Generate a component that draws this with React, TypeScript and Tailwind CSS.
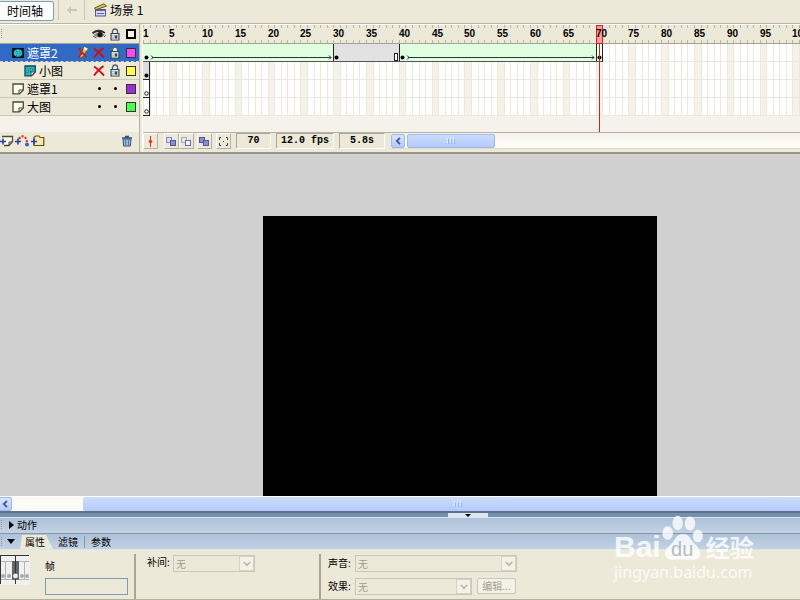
import React, { useState } from "react";

interface Layer {
  id: number;
  name: string;
  kind: "mask" | "masked" | "normal";
  locked: boolean;
  hidden: boolean;
  swatch: string;
}

const LAYERS: Layer[] = [
  { id: 1, name: "遮罩2", kind: "mask", locked: true, hidden: true, swatch: "bg-[#ff4af4]" },
  { id: 2, name: "小图", kind: "masked", locked: true, hidden: true, swatch: "bg-[#ffff4c]" },
  { id: 3, name: "遮罩1", kind: "normal", locked: false, hidden: false, swatch: "bg-[#9a2fd6]" },
  { id: 4, name: "大图", kind: "normal", locked: false, hidden: false, swatch: "bg-[#4cff4c]" },
];

const FRAME_W = 6.56;
const FRAME_COUNT = 220;
const LAST_LABEL = 100;
const ROW_H = 18;
const frames = Array.from({ length: FRAME_COUNT }, (_, i) => i + 1);
const frameX = (n: number) => Math.round((n - 1) * FRAME_W);

const EyeIcon = () => (
  <svg width="14" height="10" viewBox="0 0 14 10">
    <path d="M0 3.5Q3 .4 7 .8Q11 1 13.5 3.4L12.5 4.6Q9 2.6 6.5 3Q3.5 3.2 1 5Z" fill="#2b2b2b" />
    <path d="M1.5 6Q4 3.6 7 3.8Q11 4 13 6Q11 8.4 8 8.6Q4 8.6 1.5 6Z" fill="#8f8e87" />
    <circle cx="8" cy="5.6" r="2.6" fill="#111" />
    <path d="M1 7L4.5 9M12 8L13.5 6.5" stroke="#555" />
  </svg>
);

const LockIcon = () => (
  <svg width="10" height="13" viewBox="0 0 10 13">
    <path d="M2.5 6V3.6Q2.5 1 5 1Q7.5 1 7.5 3.6V6" fill="#e6eef4" stroke="#56616b" strokeWidth="1.4" />
    <rect x="1" y="5.5" width="8" height="6.5" fill="#a9c0d4" stroke="#3a4046" />
    <path d="M2 6.5H8M2 8.5H4" stroke="#dfeaf4" />
    <path d="M2 11H8" stroke="#e6dc9a" />
    <path d="M5 7.5H7V10.5H5Z" fill="#3b4650" />
  </svg>
);

const CrossIcon = () => (
  <svg width="12" height="12" viewBox="0 0 12 12">
    <path d="M1 1.5Q5 4 11 10.5M10.5 1Q6 4 1 10.5" fill="none" stroke="#cc1111" strokeWidth="2" />
  </svg>
);

const PencilIcon = () => (
  <svg width="12" height="13" viewBox="0 0 12 13">
    <path d="M7.5 .8L10.8 2.8L6 10.5L3 12.4L3 8.5Z" fill="#f0b85a" stroke="#5b3a12" strokeWidth=".7" />
    <path d="M7.5 .8L10.8 2.8L9.6 4.8L6.5 2.8Z" fill="#fbf5e4" />
    <path d="M1.5 2L9.5 11.5M6 6L1.5 11" stroke="#d01818" strokeWidth="1.7" />
  </svg>
);

const LayerIcon = ({ kind }: { kind: Layer["kind"] }) => {
  if (kind === "mask") {
    return (
      <svg width="12" height="12" viewBox="0 0 12 12">
        <rect y="1" width="12" height="10" fill="#0a0f12" />
        <ellipse cx="6" cy="6" rx="4.3" ry="3.8" fill="#22c3d4" />
        <path d="M4 4h1v1H4zM7 4h1v1H7zM5 6h1v1H5zM8 6h1v1H8zM4 8h1v1H4zM7 8h1v1H7z" fill="#0f7583" />
      </svg>
    );
  }
  const masked = kind === "masked";
  return (
    <svg width="12" height="12" viewBox="0 0 12 12">
      <path
        d="M1 1H11.3V7L7.5 10.8H1Z"
        fill={masked ? "#22b8c8" : "#fffff0"}
        stroke={masked ? "#0c4650" : "#4a4a38"}
        strokeWidth="1.3"
      />
      {masked && <path d="M3 3h1v1H3zM6 3h1v1H6zM4 5h1v1H4zM8 4h1v1H8zM3 7h1v1H3zM6 6h1v1H6z" fill="#083b44" />}
      <path d="M7 10.8V7H11Z" fill="#fff" stroke="#4a4a38" />
    </svg>
  );
};

const Dot = () => <span className="block h-[3px] w-[3px] rounded-full bg-black" />;

const Grip = () => (
  <svg width="5" height="10" viewBox="0 0 5 10" className="shrink-0">
    <path d="M1.5 0V10" stroke="#8f9aa4" strokeDasharray="1 1" />
  </svg>
);

const LayerRow = ({ layer, selected, onSelect }: { layer: Layer; selected: boolean; onSelect: () => void }) => (
  <li
    onClick={onSelect}
    className={`flex h-[18px] items-center border-b ${
      selected ? "border-dashed border-[#d8d4c0] bg-[#316ac5] text-white" : "border-[#cbc7b5] text-black"
    }`}
  >
    <button
      type="button"
      className={`flex flex-1 items-center gap-[3px] text-left text-[12px] leading-4 ${
        layer.kind === "masked" ? "pl-6" : "pl-3"
      }`}
    >
      <LayerIcon kind={layer.kind} />
      {layer.name}
    </button>
    <span className="flex w-4 justify-center">{selected && <PencilIcon />}</span>
    <button type="button" aria-label="隐藏" className="flex w-4 justify-center">
      {layer.hidden ? <CrossIcon /> : <Dot />}
    </button>
    <button type="button" aria-label="锁定" className="flex w-4 justify-center">
      {layer.locked ? <LockIcon /> : <Dot />}
    </button>
    <button type="button" aria-label="轮廓" className="flex w-4 justify-center">
      <span className={`block h-[10px] w-[10px] border border-[#333] ${layer.swatch}`} />
    </button>
  </li>
);

// Frame numbers and tick marks
const Ruler = () => (
  <svg width="100%" height="20" className="block bg-[#ece9d8]">
    <path d="M0 .5H2000" stroke="#fff" />
    {frames.map((n) => (
      <path key={n} d={`M${frameX(n) + 0.5} 1v3M${frameX(n) + 0.5} 16v3`} stroke="#b9b5a2" />
    ))}
    <path d="M0 19.5H2000" stroke="#a5a193" />
    <rect x={frameX(70) + 0.5} y="1.5" width="6" height="18" fill="#ff9b9b" stroke="#d42020" />
    {frames
      .filter((n) => n <= LAST_LABEL && (n === 1 || n % 5 === 0))
      .map((n) => (
        <text key={n} x={frameX(n)} y="13" className="font-['Liberation_Sans'] text-[10px] font-bold">
          {n}
        </text>
      ))}
  </svg>
);

const Tween = ({ from, to }: { from: number; to: number }) => {
  const x1 = frameX(from);
  const x2 = frameX(to);
  return (
    <g>
      <rect x={x1} y="0" width={x2 - x1} height="17" fill="#e0ffe0" />
      <path d={`M${x1 + 9} 13.5H${x2 - 2}`} stroke="#333" />
      <path d={`M${x1 + 8} 11.5l2 2l-2 2M${x2 - 4} 11.5l2 2l-2 2`} fill="none" stroke="#333" />
      <circle cx={x1 + 3.5} cy="13.5" r="2" />
    </g>
  );
};

const FrameGrid = () => (
  <svg width="100%" height="88" className="block bg-white">
    {frames.map((n) => (
      <g key={n}>
        {n % 5 === 0 && <rect x={frameX(n)} y="0" width="7" height="72" fill="#f5f2eb" />}
        <path d={`M${frameX(n) + 0.5} 0V72`} stroke="#ece9d8" />
      </g>
    ))}
    {[1, 2, 3, 4].map((r) => (
      <path key={r} d={`M0 ${r * ROW_H - 0.5}H2000`} stroke="#ece9d8" />
    ))}
    <rect y="72" width="100%" height="16" fill="#f5f2ec" />

    <Tween from={1} to={30} />
    <rect x={frameX(30)} width={frameX(40) - frameX(30)} height="17" fill="#e2e2e4" />
    <circle cx={frameX(30) + 3.5} cy="13.5" r="2" />
    <rect x={frameX(40) - 4.5} y="9.5" width="3" height="7" fill="#fff" stroke="#222" />
    <Tween from={40} to={70} />
    <rect x={frameX(70)} width="7" height="17" fill="#f0fff0" />
    <circle cx={frameX(70) + 3.5} cy="13.5" r="2" />
    <path d={`M${frameX(30) + 0.5} 0V17M${frameX(40) + 0.5} 0V17`} stroke="#222" />
    <path d={`M${frameX(70) + 0.5} 0V17M${frameX(71) + 0.5} 0V18`} stroke="#222" />
    <path d={`M0 17.5H${frameX(71)}`} stroke="#555" />

    {/* first frame of the lower layers */}
    <rect x="0" y="18" width="6" height="17" fill="#dcdcde" />
    <circle cx="3.5" cy="31.5" r="2" />
    <circle cx="3.5" cy="49.5" r="1.8" fill="#fff" stroke="#222" />
    <circle cx="3.5" cy="67.5" r="1.8" fill="#fff" stroke="#222" />
    <path d="M6.5 18V72M0 35.5H7M0 53.5H7M0 71.5H7" stroke="#222" />

    <path d={`M${frameX(70) + 3.5} 0V88`} stroke="#cc2222" />
  </svg>
);

const ToolButton = ({ label, children }: { label: string; children: React.ReactNode }) => (
  <button
    type="button"
    aria-label={label}
    className="flex h-4 w-[15px] items-center justify-center border border-t-white border-r-[#b5b19f] border-b-[#b5b19f] border-l-white"
  >
    <svg width="11" height="11" viewBox="0 0 11 11">
      {children}
    </svg>
  </button>
);

const StatusField = ({ className, children }: { className: string; children: React.ReactNode }) => (
  <output
    className={`flex h-4 items-center justify-center border border-t-[#aca899] border-r-white border-b-white border-l-[#aca899] font-['Liberation_Mono'] text-[10px] leading-3 font-bold whitespace-pre ${className}`}
  >
    {children}
  </output>
);

const ThumbGrip = () => (
  <svg width="8" height="6" viewBox="0 0 8 6">
    <path d="M.5 0V5M3.5 0V5M6.5 0V5" stroke="#eef4ff" />
    <path d="M1.5 1V6M4.5 1V6M7.5 1V6" stroke="#8cb0f8" />
  </svg>
);

const ScrollArrow = () => (
  <button
    type="button"
    aria-label="向左滚动"
    className="flex h-[14px] w-[14px] shrink-0 items-center justify-center rounded-[2px] border border-[#9fb8ea] bg-gradient-to-b from-[#d9e4ff] to-[#b4cafc]"
  >
    <svg width="6" height="8" viewBox="0 0 6 8">
      <path d="M5 .8L1.8 4L5 7.2" fill="none" stroke="#40588c" strokeWidth="1.8" />
    </svg>
  </button>
);

const SelectBox = ({ id, className }: { id: string; className: string }) => (
  <span className={`relative flex h-[17px] ${className}`}>
    <select
      id={id}
      disabled
      className="w-full appearance-none border border-[#c9c7ba] bg-[#ece9d8] pl-[2px] text-[10px] leading-[14px] text-[#a09d8c] opacity-100"
    >
      <option>无</option>
    </select>
    <span className="pointer-events-none absolute inset-y-px right-px flex w-[15px] items-center justify-center border border-[#d6d3c4] bg-[#f3f1e8]">
      <svg width="8" height="6" viewBox="0 0 8 6">
        <path d="M.8 1L4 4.2L7.2 1" fill="none" stroke="#bdbaa9" strokeWidth="1.7" />
      </svg>
    </span>
  </span>
);

const Timeline = ({ selected, onSelect }: { selected: number; onSelect: (id: number) => void }) => (
  <section className="flex shrink-0 border-b-2 border-[#98968a] bg-[#ece9d8]">
    <div className="flex w-[139px] shrink-0 flex-col">
      <div className="flex h-5 items-center border-t border-b border-t-white border-b-[#a5a193]">
        <Grip />
        <span className="flex-1" />
        <span className="flex w-4 justify-center"><EyeIcon /></span>
        <span className="flex w-4 justify-center"><LockIcon /></span>
        <span className="flex w-4 justify-center">
          <span className="block h-[10px] w-[10px] border-2 border-black bg-[#f4f2e6]" />
        </span>
      </div>
      <ul>
        {LAYERS.map((l) => (
          <LayerRow key={l.id} layer={l} selected={l.id === selected} onSelect={() => onSelect(l.id)} />
        ))}
      </ul>
      <div className="h-4 bg-[#f5f2ec]" />
      <div className="flex h-[18px] items-center gap-px pr-[6px]">
        <button type="button" aria-label="插入图层">
          <svg width="14" height="12" viewBox="0 0 14 12">
            <path d="M2 1.5H12.5V6.5L9 10.5H4" fill="#fffff0" stroke="#4a4a38" strokeWidth="1.3" />
            <path d="M9 10V7H12" fill="none" stroke="#4a4a38" />
            <path d="M0 6.5H6M3 3.5V9.5" stroke="#2b3fa8" strokeWidth="1.6" />
          </svg>
        </button>
        <button type="button" aria-label="添加引导层">
          <svg width="15" height="12" viewBox="0 0 15 12">
            <path d="M4 4Q6 .8 8.5 1.5Q11 2 12 7" fill="none" stroke="#e02020" strokeWidth="2" strokeDasharray="2 1.5" />
            <path d="M0 6.5H6M3 3.5V9.5" stroke="#2b3fa8" strokeWidth="1.6" />
            <circle cx="12" cy="9.5" r="2" fill="#2f62d8" />
          </svg>
        </button>
        <button type="button" aria-label="插入图层文件夹">
          <svg width="14" height="12" viewBox="0 0 14 12">
            <path d="M3 10.5V2.5L4.5 1H8L9 2.5H12.8V10.5Z" fill="#f9e6ac" stroke="#5c5020" strokeWidth="1.2" />
            <path d="M0 6.5H6M3 3.5V9.5" stroke="#2b3fa8" strokeWidth="1.6" />
          </svg>
        </button>
        <span className="flex-1" />
        <button type="button" aria-label="删除图层">
          <svg width="12" height="12" viewBox="0 0 12 12">
            <path d="M2 4H10L9.4 11H2.6Z" fill="#9db8dc" stroke="#33527e" />
            <path d="M1 3H11M4 1.5H8" stroke="#33527e" strokeWidth="1.4" />
            <path d="M4.5 5V10M7.5 5V10" stroke="#5878a6" />
          </svg>
        </button>
      </div>
    </div>

    <div className="w-1 shrink-0 border-r border-l border-r-[#fffef8] border-l-[#b5b19f]" />

    <div className="min-w-0 flex-1">
      <Ruler />
      <FrameGrid />
      <div className="flex h-5 items-start border-t border-[#b9b2a2]">
        <div className="flex shrink-0 items-center pr-[5px]">
          <ToolButton label="帧居中">
            <path d="M5.5 0V11" stroke="#e03030" />
            <path d="M5.5 3L7.5 5.5L5.5 8L3.5 5.5Z" fill="#e03030" />
          </ToolButton>
          <span className="w-[6px]" />
          <ToolButton label="绘图纸外观">
            <rect x=".5" y="1.5" width="5" height="5" fill="#d9dcf2" stroke="#8488c0" />
            <rect x="4.5" y="4.5" width="5" height="5" fill="#8a8fce" stroke="#51569c" />
          </ToolButton>
          <ToolButton label="绘图纸外观轮廓">
            <rect x=".5" y="1.5" width="5" height="5" fill="none" stroke="#a3a6d2" />
            <rect x="4.5" y="4.5" width="5" height="5" fill="#f6f6ff" stroke="#666bb0" />
          </ToolButton>
          <span className="w-[3px]" />
          <ToolButton label="编辑多个帧">
            <rect x=".5" y="1.5" width="5" height="5" fill="#8a8fce" stroke="#51569c" />
            <rect x="4.5" y="4.5" width="5" height="5" fill="#8a8fce" stroke="#51569c" />
          </ToolButton>
          <span className="w-1" />
          <ToolButton label="修改绘图纸标记">
            <path d="M3 1.5H1.5V4M1.5 7V9.5H3M8 1.5H9.5V4M9.5 7V9.5H8" fill="none" stroke="#3c4160" />
            <rect x="5" y="5" width="1" height="1" fill="#3c4160" />
          </ToolButton>
        </div>
        <div className="flex shrink-0 gap-[5px] pr-[6px]">
          <StatusField className="w-[35px]">70</StatusField>
          <StatusField className="w-[58px]">12.0 fps</StatusField>
          <StatusField className="w-[46px]">5.8s</StatusField>
        </div>
        <div className="flex h-4 min-w-0 flex-1 items-center gap-[2px] border-b border-[#dedac8] bg-gradient-to-b from-[#f5f2ea] to-[#fefefa]">
          <ScrollArrow />
          <div className="flex h-[14px] w-[88px] items-center justify-center rounded-[2px] border border-[#9fb8ea] bg-gradient-to-b from-[#cddcff] to-[#b4cafc]">
            <ThumbGrip />
          </div>
        </div>
      </div>
    </div>
  </section>
);

const Watermark = () => (
  <div className="pointer-events-none absolute right-[45px] bottom-[17px] w-[141px] text-white/80">
    <div className="flex h-[46px] items-end">
      <span className="font-['Liberation_Sans'] text-[30px] leading-[28px] font-bold">Bai</span>
      <span className="relative mr-[3px] ml-px block h-[46px] w-[41px] shrink-0">
        <svg width="41" height="46" viewBox="0 0 41 46" fill="currentColor">
          <ellipse cx="5.7" cy="18" rx="5.3" ry="6.8" />
          <ellipse cx="15.7" cy="8" rx="5.2" ry="7.2" />
          <ellipse cx="28" cy="8.5" rx="5.2" ry="7" />
          <ellipse cx="35.8" cy="21" rx="5" ry="6.3" />
          <path d="M21 19C27 19 28 24 32 28C36 32 39 35 38 40C37 45 32 45 28 44.5H14C9 46 3 44 3 38C3 33 8 31 11 27C14 23 15 19 21 19Z" />
        </svg>
        <span className="absolute inset-x-0 bottom-0 text-center font-['Liberation_Sans'] text-[20px] leading-[24px] text-[#b3bcc4]">
          du
        </span>
      </span>
      <span className="text-[24px] leading-[28px] font-bold whitespace-nowrap">经验</span>
    </div>
    <div className="font-['Noto_Sans'] text-[16px] leading-[22px]">jingyan.baidu.com</div>
  </div>
);

const Properties = () => (
  <section className="flex h-[50px] shrink-0 border-b border-[#b3b09c] bg-[#ece9d8] text-[10px] leading-4">
    <svg width="30" height="30" viewBox="0 0 30 30" className="mt-[5px] shrink-0">
      <rect width="30" height="30" fill="#f0f0f0" />
      <path d="M0 .5H29M.5 0V29" stroke="#333" />
      <path d="M1 6.5H29M1 24.5H29M5.5 6V25M24.5 6V25" stroke="#b4b4b4" />
      <rect x="12" y="6" width="7" height="19" fill="#666" />
      <path d="M15.5 1V29" stroke="#333" />
      <g fill="#aaa">
        <circle cx="3" cy="21" r="2" />
        <circle cx="9" cy="21" r="2" />
        <circle cx="22" cy="21" r="2" />
        <circle cx="27" cy="21" r="2" />
      </g>
      <circle cx="15.5" cy="21" r="2.4" fill="#eee" />
    </svg>
    <div className="flex w-[104px] shrink-0 flex-col gap-1 pt-2 pl-[15px]">
      <label htmlFor="frame-name">帧</label>
      <input id="frame-name" className="h-[17px] w-[83px] border border-[#7f9db9] bg-[#ece9d8] px-1" />
    </div>
    <div className="mt-1 flex w-[185px] shrink-0 items-start border-l-2 border-[#a9a693] pl-[11px]">
      <label htmlFor="tween" className="w-[26px]">补间:</label>
      <SelectBox id="tween" className="mt-px w-[82px]" />
    </div>
    <div className="mt-1 flex flex-col gap-[6px] border-l-2 border-[#a9a693] pt-px pl-[7px]">
      <div className="flex">
        <label htmlFor="sound" className="w-[27px]">声音:</label>
        <SelectBox id="sound" className="w-[162px]" />
      </div>
      <div className="flex">
        <label htmlFor="effect" className="w-[27px]">效果:</label>
        <SelectBox id="effect" className="w-[117px]" />
        <button
          type="button"
          disabled
          className="ml-[5px] h-4 w-[39px] rounded-[2px] border border-[#c9c7ba] bg-[#f3f1e8] leading-[14px] text-[#a09d8c]"
        >
          编辑...
        </button>
      </div>
    </div>
  </section>
);

const App: React.FC = () => {
  const [selected, setSelected] = useState(1);

  return (
    <div className="relative flex h-screen w-full flex-col overflow-hidden bg-[#ece9d8] font-['Noto_Sans_CJK_SC',sans-serif] text-black">
      {/* Title strip */}
      <header className="flex h-6 shrink-0 items-start border-b border-[#b9b5a2] text-[12px] leading-4">
        <button
          type="button"
          className="mt-px h-5 w-[54px] rounded-r-[3px] border border-l-0 border-[#7f9db9] bg-[#fdfdfb] pr-[3px]"
        >
          时间轴
        </button>
        <button
          type="button"
          aria-label="返回"
          className="ml-1 flex h-5 w-[27px] items-center justify-center border-r border-l border-[#cbc7b5]"
        >
          <svg width="12" height="8" viewBox="0 0 12 8">
            <path d="M5 0V3H11V5H5V8L1 4Z" fill="#c9c6b7" />
          </svg>
        </button>
        <div className="flex h-5 items-center gap-[3px] pl-[9px]">
          <svg width="13" height="14" viewBox="0 0 13 14">
            <path d="M.5 5L10 .8L12.5 3L2 6.8Z" fill="#d8cb3c" stroke="#5a5420" />
            <rect x="1.5" y="6.5" width="10" height="6.5" fill="#d9d9f6" stroke="#56568c" />
            <path d="M2 7.5H11M3 10.5H10" stroke="#6565a5" />
          </svg>
          <span>场景 1</span>
        </div>
      </header>

      <Timeline selected={selected} onSelect={setSelected} />

      {/* Stage */}
      <main className="flex min-h-0 flex-1 justify-center bg-[#d0d0d0] pt-[62px] pl-[120px]">
        <div className="w-[394px] bg-black" />
      </main>

      <div className="flex h-[15px] shrink-0 items-center border-t border-white bg-[#fbfaf5]">
        <div className="flex w-3 justify-end overflow-hidden">
          <ScrollArrow />
        </div>
        <div className="ml-[71px] flex h-[14px] flex-1 items-center justify-center rounded-l-[2px] bg-gradient-to-b from-[#cddcff] to-[#b4cafc] pl-8">
          <ThumbGrip />
        </div>
      </div>

      <div className="flex h-[7px] shrink-0 justify-center border-t-2 border-b border-t-[#5c7389] border-b-[#dbe5ef] bg-[#7490aa] pl-[136px]">
        <button
          type="button"
          aria-label="折叠面板"
          className="flex w-10 items-center justify-center bg-[#dfe5ee]"
        >
          <svg width="6" height="3" viewBox="0 0 6 3">
            <path d="M0 0H6L3 3Z" />
          </svg>
        </button>
      </div>

      <button
        type="button"
        className="flex h-4 shrink-0 items-center gap-[3px] border-b border-[#8997a3] bg-gradient-to-b from-[#adc1d9] to-[#c3d2e3] pb-[2px] text-[10px] leading-3"
      >
        <Grip />
        <svg width="6" height="8" viewBox="0 0 6 8">
          <path d="M1 0L6 4L1 8Z" />
        </svg>
        动作
      </button>

      <div className="flex h-4 shrink-0 items-center border-b border-[#dbe5ef] bg-gradient-to-b from-[#adc1d9] to-[#c3d2e3] text-[10px] leading-3">
        <Grip />
        <svg width="8" height="5" viewBox="0 0 8 5" className="ml-[2px]">
          <path d="M0 0H8L4 5Z" />
        </svg>
        <div role="tablist" className="ml-[5px] flex h-full items-center">
          <button
            type="button"
            role="tab"
            aria-selected="true"
            className="h-[14px] w-[33px] self-end bg-[#ece9d8] pr-2 pb-px pl-[5px] whitespace-nowrap [clip-path:polygon(2px_0,26px_0,100%_100%,0_100%)]"
          >
            属性
          </button>
          <button type="button" role="tab" aria-selected="false" className="ml-[5px] border-r border-[#8997a3] pr-[6px]">
            滤镜
          </button>
          <button type="button" role="tab" aria-selected="false" className="ml-[6px]">
            参数
          </button>
        </div>
      </div>

      <Properties />
      <Watermark />
    </div>
  );
};

export default App;
